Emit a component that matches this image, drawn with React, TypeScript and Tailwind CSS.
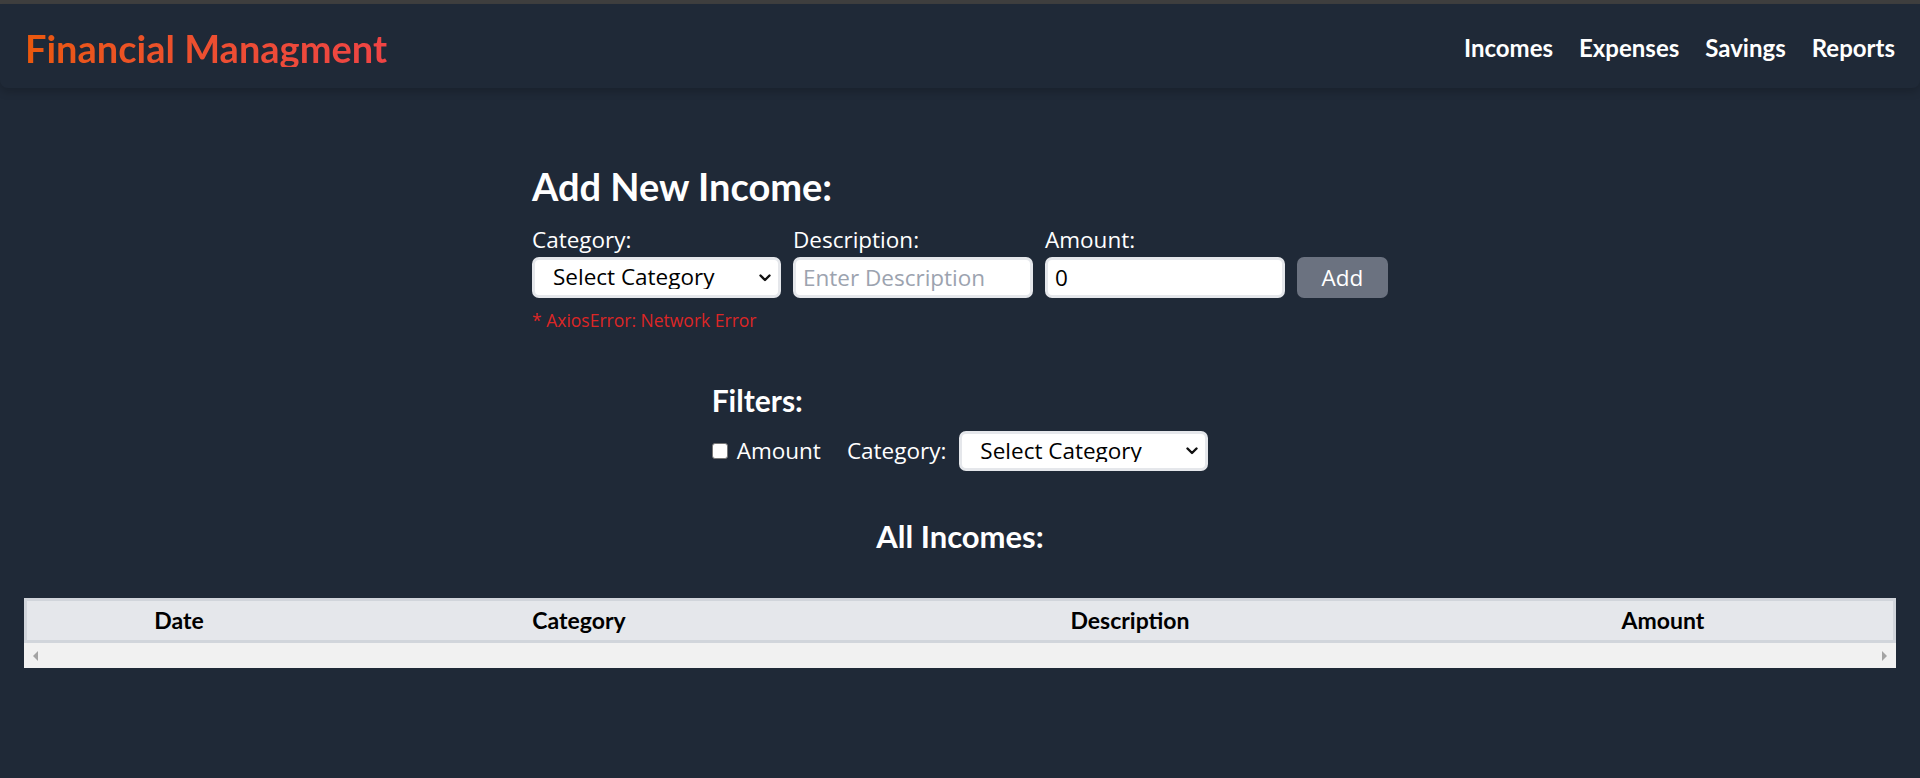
import { useState } from "react";

const bold = "font-['Lato',sans-serif] font-bold";
const regular = "font-['Open_Sans',sans-serif]";

function Chevron() {
  return (
    <svg viewBox="0 0 12 8" className="pointer-events-none absolute right-[10px] top-1/2 h-[8px] w-[12px] -translate-y-1/2">
      <path d="M1.5 1.5 L6 6 L10.5 1.5" fill="none" stroke="#111" strokeWidth="2.4" strokeLinecap="round" strokeLinejoin="round" />
    </svg>
  );
}

function CategorySelect({ height }: { height: string }) {
  return (
    <div className="relative w-[249px]">
      <select
        className={`${height} w-full appearance-none rounded-[7px] border-[3px] border-[#e5e7eb] bg-white pl-[18px] pr-8 text-[22.5px] leading-none text-black outline-none ${regular}`}
        defaultValue=""
      >
        <option value="">Select Category</option>
        <option value="salary">Salary</option>
        <option value="other">Other</option>
      </select>
      <Chevron />
    </div>
  );
}

function Header() {
  return (
    <header className="flex h-[84px] items-center justify-between rounded-b-lg px-[25px] pt-[3px] shadow-[0_4px_8px_rgba(0,0,0,0.18)]">
      <h1 className={`bg-linear-to-r from-[#ea580c] to-[#ef4444] bg-clip-text text-[38px] leading-none text-transparent ${bold}`}>
        Financial Managment
      </h1>
      <nav className={`flex gap-[26px] text-[24px] leading-none text-white ${bold}`}>
        <a href="#">Incomes</a>
        <a href="#">Expenses</a>
        <a href="#">Savings</a>
        <a href="#">Reports</a>
      </nav>
    </header>
  );
}

function AddIncomeForm() {
  const [amount, setAmount] = useState("0");

  return (
    <section className="mx-auto w-fit">
      <h2 className={`mb-[17px] text-[38px] leading-[45px] text-white ${bold}`}>Add New Income:</h2>

      <div className={`flex items-end gap-3 ${regular}`}>
        <label className="flex flex-col">
          <span className="mb-[3px] text-[22.5px] leading-[28px] text-white">Category:</span>
          <CategorySelect height="h-[41px]" />
        </label>

        <label className="flex flex-col">
          <span className="mb-[3px] text-[22.5px] leading-[28px] text-white">Description:</span>
          <input
            type="text"
            placeholder="Enter Description"
            className="h-[41px] w-[240px] rounded-[7px] border-[3px] border-[#e5e7eb] bg-white px-[7px] text-[22.5px] text-black outline-none placeholder:text-[#9ca3af]"
          />
        </label>

        <label className="flex flex-col">
          <span className="mb-[3px] text-[22.5px] leading-[28px] text-white">Amount:</span>
          <input
            type="number"
            value={amount}
            onChange={(e) => setAmount(e.target.value)}
            className="h-[41px] w-[240px] appearance-none rounded-[7px] border-[3px] border-[#e5e7eb] bg-white px-[7px] text-[22.5px] text-black outline-none [&::-webkit-inner-spin-button]:appearance-none"
          />
        </label>

        <button className="h-[41px] w-[91px] rounded-[7px] bg-[#6b7280] pt-px text-[22.5px] text-white">Add</button>
      </div>

      <p className={`mt-[10px] text-[17.5px] leading-[24px] text-[#dc2626] ${regular}`}>* AxiosError: Network Error</p>
    </section>
  );
}

function Filters() {
  return (
    <section className="mx-auto mt-[50px] w-fit">
      <h3 className={`text-[30px] leading-[36px] text-white ${bold}`}>Filters:</h3>
      <div className={`mt-[13px] flex items-center text-[22.5px] leading-[28px] text-white ${regular}`}>
        <input
          type="checkbox"
          className="h-[16px] w-[16px] shrink-0 appearance-none rounded-[3px] border border-[#767676] bg-white"
        />
        <span className="ml-[9px]">Amount</span>
        <span className="ml-[26px]">Category:</span>
        <div className="ml-[13px]">
          <CategorySelect height="h-[40px]" />
        </div>
      </div>
    </section>
  );
}

function IncomesTable() {
  return (
    <section className="mt-[47px]">
      <h3 className={`text-center text-[31px] leading-[36px] text-white ${bold}`}>All Incomes:</h3>

      <div className="mx-[24px] mt-[44px] bg-[#f1f1f1]">
        <div className="border-[3px] border-[#d1d5db] bg-[#e5e7eb]">
          <table className="w-full table-fixed">
            <thead>
              <tr className={`h-[39px] text-[23px] leading-none text-black ${bold}`}>
                <th className="w-[304px]">Date</th>
                <th className="w-[496px]">Category</th>
                <th className="w-[606px]">Description</th>
                <th>Amount</th>
              </tr>
            </thead>
          </table>
        </div>
        <div className="flex h-[25px] items-center justify-between px-[9px]">
          <span className="h-0 w-0 border-y-[5px] border-r-[5px] border-y-transparent border-r-[#a3a3a3]" />
          <span className="h-0 w-0 border-y-[5px] border-l-[5px] border-y-transparent border-l-[#a3a3a3]" />
        </div>
      </div>
    </section>
  );
}

export default function App() {
  return (
    <div className="min-h-screen bg-[#1f2937]">
      <div className="h-[4px] bg-[#3f3f3f]" />
      <Header />
      <main className="pt-[76px]">
        <AddIncomeForm />
        <Filters />
        <IncomesTable />
      </main>
    </div>
  );
}
